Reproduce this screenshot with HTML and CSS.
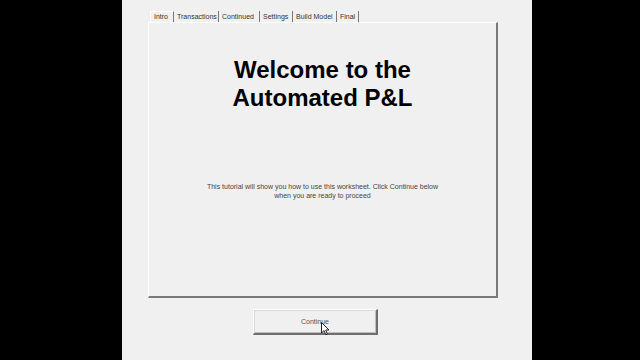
FILE: index.html
```html
<!DOCTYPE html>
<html lang="en">
<head>
    <meta charset="UTF-8">
    <title>Automated P&amp;L</title>
    <link rel="stylesheet" href="styles.css">
</head>
<body>
    <div class="panel">
        <div class="tabs">
            <span class="tab active">Intro</span>
            <span class="tab w-trans">Transactions</span>
            <span class="tab w-cont">Continued</span>
            <span class="tab w-set">Settings</span>
            <span class="tab w-build">Build Model</span>
            <span class="tab w-final">Final</span>
        </div>
        <div class="frame">
            <h1>Welcome to the<br>Automated P&amp;L</h1>
            <p class="intro-text">This tutorial will show you how to use this worksheet. Click Continue below<br>when you are ready to proceed</p>
        </div>
        <button class="continue-btn">Continue
            <svg class="cursor" width="10" height="14" viewBox="0 0 10 14">
                <path d="M0.5 0.5 L0.5 11 L3 8.6 L4.8 12.8 L6.4 12.1 L4.7 8 L8 8 Z" fill="#fff" stroke="#222" stroke-width="1"/>
            </svg>
        </button>
    </div>
</body>
</html>
```
FILE: styles.css
```css
body {
    margin: 0;
    background: #000;
    font-family: "Liberation Sans", Arial, sans-serif;
}
.panel {
    width: 410px;
    height: 360px;
    margin-left: 122px;
    background: #f0f0f0;
    padding: 11px 0 0 26px;
    box-sizing: border-box;
}
.tabs {
    display: flex;
    height: 11px;
    margin-left: 2px;
}
.tab {
    font-size: 7px;
    line-height: 11px;
    color: #333;
    border-right: 1px solid #777;
    padding: 0 3px 0 3px;
    height: 11px;
    box-sizing: border-box;
}
.tab.active {
    width: 24px;
    padding-left: 3px;
    border-left: 1px solid #fff;
    border-top: 1px solid #fff;
    line-height: 9px;
}
.w-trans { width: 45px; }
.w-cont { width: 41px; }
.w-set { width: 33px; }
.w-build { width: 44px; }
.w-final { width: 22px; }
.frame {
    width: 350px;
    height: 276px;
    box-sizing: border-box;
    border-top: 1px solid #fff;
    border-left: 1px solid #fff;
    border-right: 2px solid #7a7a7a;
    border-bottom: 2px solid #7a7a7a;
    text-align: center;
}
h1 {
    margin: 33px 0 0;
    font-size: 24px;
    line-height: 28px;
    font-weight: bold;
    color: #000;
}
.intro-text {
    margin: 70px 0 0;
    font-size: 7px;
    line-height: 9px;
    color: #444;
}
.continue-btn {
    position: relative;
    display: block;
    margin: 11px 0 0 105px;
    width: 125px;
    height: 26px;
    background: #f0f0f0;
    border-top: 1px solid #fff;
    border-left: 1px solid #fff;
    border-right: 2px solid #6e6e6e;
    border-bottom: 2px solid #6e6e6e;
    box-shadow: inset 1px 1px 0 #d8d8d8, inset -1px -1px 0 #c0c0c0;
    font-family: "Liberation Sans", Arial, sans-serif;
    font-size: 7px;
    color: #555;
    padding: 0;
}
.cursor {
    position: absolute;
    left: 67px;
    top: 12px;
}
```
